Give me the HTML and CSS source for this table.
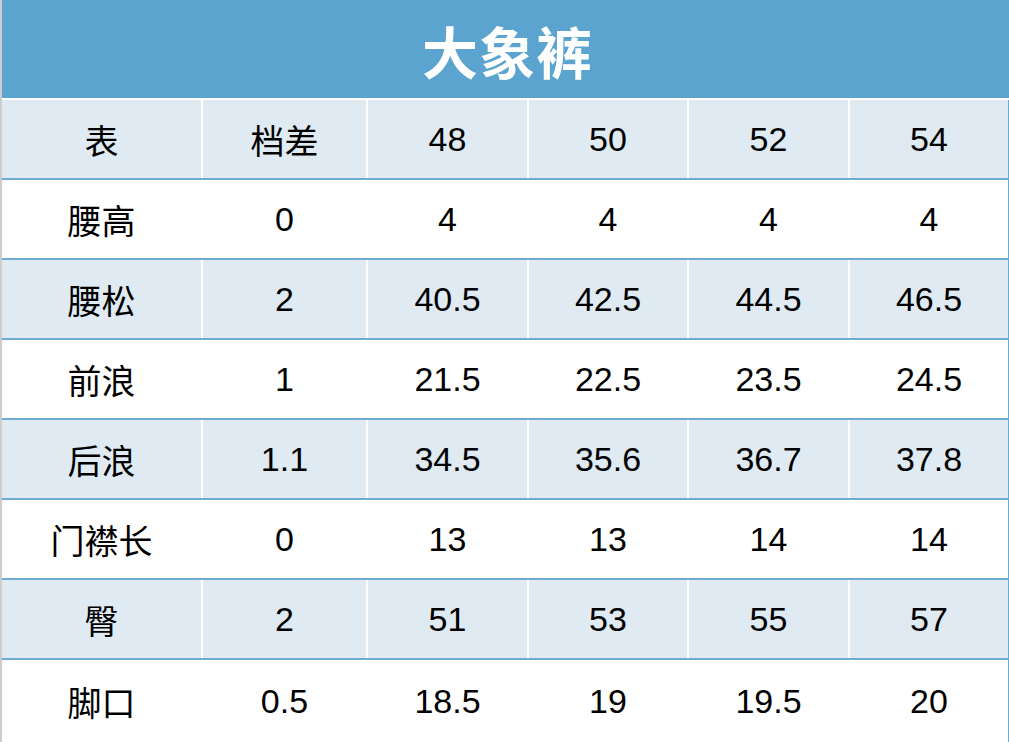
FILE: index.html
```html
<!DOCTYPE html>
<html lang="zh">
<head>
<meta charset="utf-8">
<link rel="stylesheet" href="styles.css">
</head>
<body>
<div class="page">
  <div class="title">大象裤</div>
  <div class="table">
    <div class="row shade"><div class="cell">表</div><div class="cell">档差</div><div class="cell">48</div><div class="cell">50</div><div class="cell">52</div><div class="cell">54</div></div>
    <div class="row"><div class="cell">腰高</div><div class="cell">0</div><div class="cell">4</div><div class="cell">4</div><div class="cell">4</div><div class="cell">4</div></div>
    <div class="row shade"><div class="cell">腰松</div><div class="cell">2</div><div class="cell">40.5</div><div class="cell">42.5</div><div class="cell">44.5</div><div class="cell">46.5</div></div>
    <div class="row"><div class="cell">前浪</div><div class="cell">1</div><div class="cell">21.5</div><div class="cell">22.5</div><div class="cell">23.5</div><div class="cell">24.5</div></div>
    <div class="row shade"><div class="cell">后浪</div><div class="cell">1.1</div><div class="cell">34.5</div><div class="cell">35.6</div><div class="cell">36.7</div><div class="cell">37.8</div></div>
    <div class="row"><div class="cell">门襟长</div><div class="cell">0</div><div class="cell">13</div><div class="cell">13</div><div class="cell">14</div><div class="cell">14</div></div>
    <div class="row shade"><div class="cell">臀</div><div class="cell">2</div><div class="cell">51</div><div class="cell">53</div><div class="cell">55</div><div class="cell">57</div></div>
    <div class="row last"><div class="cell">脚口</div><div class="cell">0.5</div><div class="cell">18.5</div><div class="cell">19</div><div class="cell">19.5</div><div class="cell">20</div></div>
  </div>
</div>
</body>
</html>
```
FILE: styles.css
```css
html, body {
  margin: 0;
  padding: 0;
  background: #ffffff;
}
body {
  font-family: "Liberation Sans", "Noto Sans CJK SC", sans-serif;
  color: #000;
}
.page {
  width: 1009px;
  height: 742px;
  box-sizing: border-box;
  border-left: 2px solid #cdcdcd;
  overflow: hidden;
}
.title {
  height: 98px;
  margin-bottom: 2px;
  background: #5ba4cf;
  color: #fff;
  font-family: "Noto Sans CJK SC", sans-serif;
  font-weight: 700;
  font-size: 56px;
  display: flex;
  align-items: center;
  justify-content: center;
  letter-spacing: 1px;
  padding-left: 4px;
}
.table {
  display: flex;
  flex-direction: column;
  border-right: 1px solid #6aaad5;
  margin-right: 0;
}
.row {
  display: grid;
  grid-template-columns: 199px 165px 161px 160px 161px 160px;
  height: 78px;
  border-bottom: 2px solid #6eabd4;
}
.row.last {
  border-bottom: none;
  height: 82px;
}
.row.shade {
  background: #dfeaf3;
}
.cell {
  display: flex;
  align-items: center;
  justify-content: center;
  font-size: 34px;
  border-left: 2px solid #ffffff;
}
.cell:first-child {
  border-left: none;
}
```
